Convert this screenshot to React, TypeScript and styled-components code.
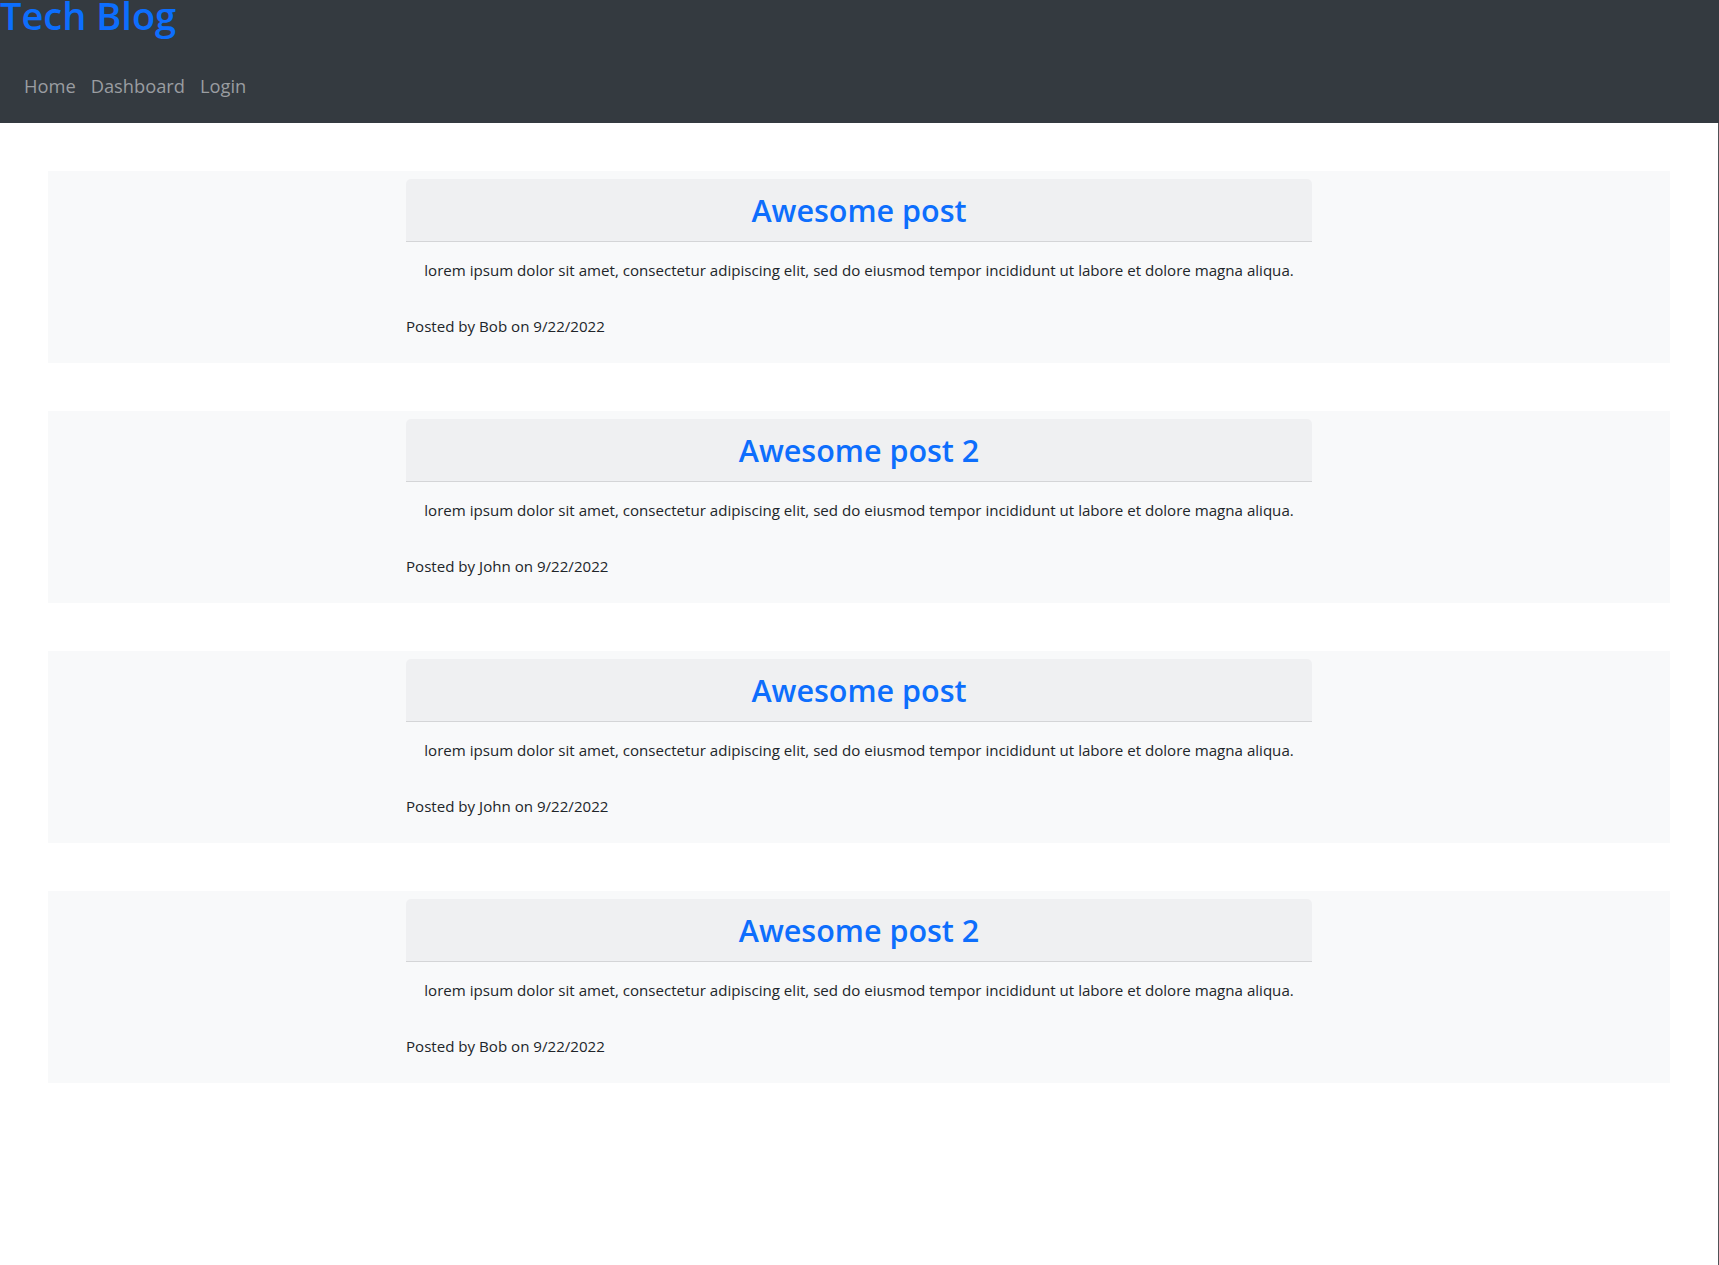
import styled, { createGlobalStyle } from 'styled-components'

const GlobalStyle = createGlobalStyle`
  html, body {
    margin: 0;
    padding: 0;
    background: #ffffff;
  }
  body {
    font-family: 'Open Sans', 'Liberation Sans', sans-serif;
    color: #212529;
  }
  * {
    box-sizing: border-box;
  }
`

const Header = styled.header`
  background: #343a40;
  height: 123px;
  overflow: hidden;
`

const Brand = styled.h1`
  margin: -7px 0 0;
  font-size: 38px;
  font-weight: 600;
  line-height: 1.2;
  color: #0d6efd;
`

const Nav = styled.nav`
  display: flex;
  gap: 15px;
  padding: 34px 0 0 24px;
`

const NavLink = styled.a`
  font-size: 18.3px;
  line-height: 26px;
  color: #9a9da1;
  text-decoration: none;
  cursor: pointer;
`

const Main = styled.main`
  display: flex;
  flex-direction: column;
  gap: 48px;
  padding: 48px;
  min-height: calc(100vh - 123px);
  border-right: 1px solid #505357;
`

const PostRow = styled.section`
  background: #f8f9fa;
  padding: 8px 0 0;
`

const Post = styled.article`
  width: 906px;
  margin: 0 auto;
`

const PostHeader = styled.div`
  background: #eff0f2;
  border-bottom: 1px solid #d4d5d7;
  border-radius: 5px 5px 0 0;
  padding: 10px 16px;
  text-align: center;
`

const PostTitle = styled.h2`
  margin: 0;
  font-size: 30.5px;
  font-weight: 600;
  line-height: 42px;
  color: #0d6efd;
`

const PostBody = styled.p`
  margin: 0;
  padding: 16.5px 0 0;
  font-size: 15.1px;
  line-height: 23px;
  text-align: center;
  white-space: nowrap;
`

const PostMeta = styled.p`
  margin: 0;
  padding: 32px 0 24.5px;
  font-size: 15.1px;
  line-height: 25px;
`

const posts = [
  { title: 'Awesome post', author: 'Bob', date: '9/22/2022' },
  { title: 'Awesome post 2', author: 'John', date: '9/22/2022' },
  { title: 'Awesome post', author: 'John', date: '9/22/2022' },
  { title: 'Awesome post 2', author: 'Bob', date: '9/22/2022' },
]

const lorem =
  'lorem ipsum dolor sit amet, consectetur adipiscing elit, sed do eiusmod tempor incididunt ut labore et dolore magna aliqua.'

export default function App() {
  return (
    <>
      <GlobalStyle />
      <Header>
        <Brand>Tech Blog</Brand>
        <Nav>
          <NavLink>Home</NavLink>
          <NavLink>Dashboard</NavLink>
          <NavLink>Login</NavLink>
        </Nav>
      </Header>
      <Main>
        {posts.map((post, i) => (
          <PostRow key={i}>
            <Post>
              <PostHeader>
                <PostTitle>{post.title}</PostTitle>
              </PostHeader>
              <PostBody>{lorem}</PostBody>
              <PostMeta>
                Posted by {post.author} on {post.date}
              </PostMeta>
            </Post>
          </PostRow>
        ))}
      </Main>
    </>
  )
}
